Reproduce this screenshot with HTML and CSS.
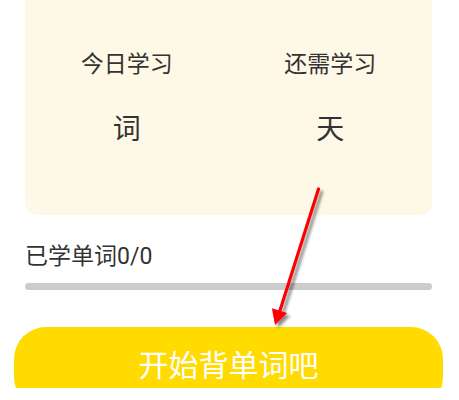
FILE: index.html
```html
<!DOCTYPE html>
<html lang="zh-CN">
<head>
<meta charset="utf-8">
<link rel="stylesheet" href="styles.css">
</head>
<body>
<div class="page">
  <div class="card">
    <div class="stats">
      <div class="label">今日学习</div>
      <div class="label">还需学习</div>
      <div class="value">词</div>
      <div class="value">天</div>
    </div>
  </div>
  <div class="progress-text">已学单词0/0</div>
  <div class="bar"></div>
  <button class="start">开始背单词吧</button>
  <svg class="arrow" width="459" height="400" viewBox="0 0 459 400">
    <defs>
      <filter id="sh" x="-50%" y="-50%" width="200%" height="200%">
        <feDropShadow dx="3" dy="3" stdDeviation="1.8" flood-color="#000" flood-opacity="0.45"/>
      </filter>
    </defs>
    <g filter="url(#sh)">
      <line x1="318.5" y1="201" x2="279.5" y2="324" stroke="#ff0000" stroke-width="3.2" stroke-linecap="round"/>
      <polygon points="275,337 271.9,320.3 287.1,325.1" fill="#ff0000"/>
    </g>
  </svg>
</div>
</body>
</html>
```
FILE: styles.css
```css
html, body {
  margin: 0;
  padding: 0;
  background: #ffffff;
  overflow: hidden;
}
.page {
  position: relative;
  width: 459px;
  height: 400px;
  font-family: "Roboto", "Noto Sans CJK SC", "Noto Sans", sans-serif;
  color: #333333;
}
.card {
  margin: -12px 27px 0 25px;
  background: #fef9e6;
  border-radius: 12px;
  padding: 60px 0 65px;
}
.stats {
  display: grid;
  grid-template-columns: 1fr 1fr;
  row-gap: 28px;
  text-align: center;
}
.label {
  font-size: 23px;
  line-height: 34px;
}
.value {
  font-size: 28px;
  line-height: 40px;
}
.progress-text {
  margin: 27px 27px 0 25px;
  font-size: 23px;
  line-height: 30px;
}
.bar {
  margin: 11px 27px 0 25px;
  height: 7px;
  border-radius: 4px;
  background: #cccccc;
}
.start {
  display: block;
  box-sizing: border-box;
  margin: 37px 0 0 14px;
  width: 429px;
  height: 82px;
  border: none;
  border-radius: 32px;
  background: #ffdb00;
  color: #ffffff;
  font-family: "Roboto", "Noto Sans CJK SC", "Noto Sans", sans-serif;
  font-size: 30px;
  line-height: 78px;
  padding: 0 0 4px;
}
.arrow {
  position: absolute;
  left: 0;
  top: 0;
  pointer-events: none;
}
```
